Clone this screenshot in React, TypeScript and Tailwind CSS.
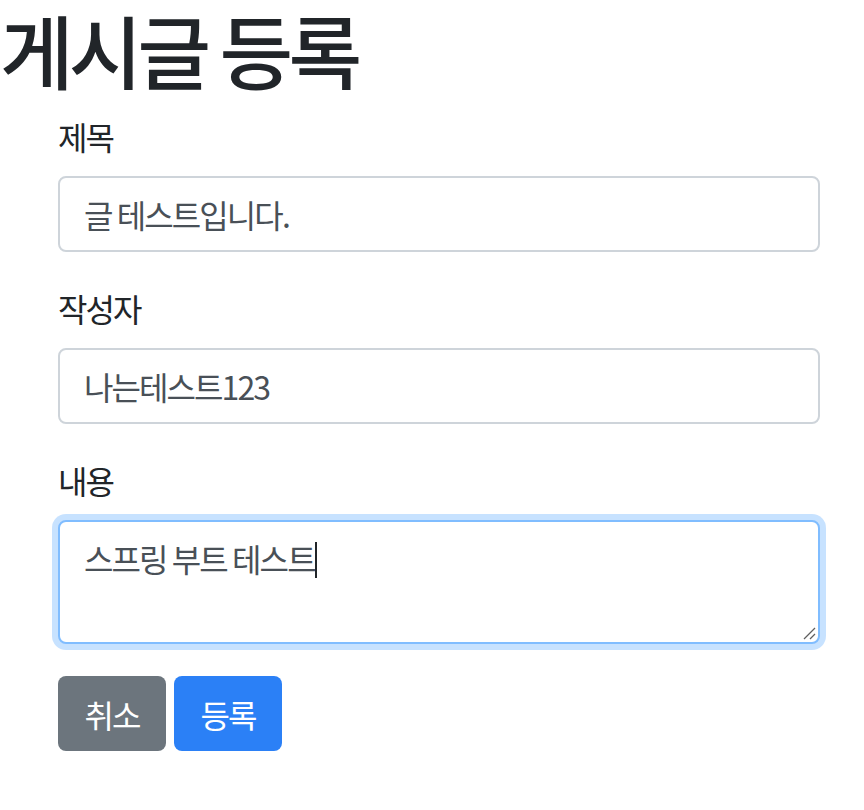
const fontStack = { fontFamily: '"Noto Sans CJK KR", "Noto Sans", sans-serif' };

interface FieldProps {
  label: string;
  value: string;
}

function Field({ label, value }: FieldProps) {
  return (
    <div className="mb-8">
      <label className="block mb-4 text-[32px] leading-[48px] tracking-[-0.06em] text-[#212529]">
        {label}
      </label>
      <div className="h-[76px] px-[24px] border-2 border-[#ced4da] rounded-[8px] flex items-center text-[32px] tracking-[-0.06em] text-[#495057] bg-white whitespace-pre">
        {value}
      </div>
    </div>
  );
}

export default function App() {
  return (
    <div className="bg-white min-h-[810px] w-[864px]" style={fontStack}>
      <h1 className="text-[80px] leading-[96px] font-medium tracking-[-0.06em] text-[#212529] mb-4">
        게시글 등록
      </h1>

      <form className="ml-[58px] mr-[44px]">
        <Field label="제목" value="글 테스트입니다." />
        <Field label="작성자" value="나는테스트123" />

        <div className="mb-8">
          <label className="block mb-4 text-[32px] leading-[48px] tracking-[-0.06em] text-[#212529]">
            내용
          </label>
          <div className="relative h-[124px] px-[24px] py-[12px] border-2 border-[#80bdff] rounded-[8px] shadow-[0_0_0_6px_rgba(0,123,255,0.22)] text-[32px] leading-[48px] tracking-[-0.06em] text-[#495057] bg-white whitespace-pre">
            <span>스프링 부트 테스트</span>
            <span className="inline-block w-[2px] h-[36px] bg-[#212529] align-[-6px]" />
            {/* resize grip */}
            <svg className="absolute right-[2px] bottom-[2px]" width="14" height="14" viewBox="0 0 14 14">
              <line x1="2" y1="13" x2="13" y2="2" stroke="#5f5f5f" strokeWidth="1.3" />
              <line x1="8" y1="13" x2="13" y2="8" stroke="#5f5f5f" strokeWidth="1.3" />
            </svg>
          </div>
        </div>

        <div className="flex gap-2">
          <button
            type="button"
            className="h-[75px] w-[108px] rounded-[8px] bg-[#6c757d] text-white text-[32px] tracking-[-0.06em]"
          >
            취소
          </button>
          <button
            type="button"
            className="h-[75px] w-[108px] rounded-[8px] bg-[#2b80f6] text-white text-[32px] tracking-[-0.06em]"
          >
            등록
          </button>
        </div>
      </form>
    </div>
  );
}
